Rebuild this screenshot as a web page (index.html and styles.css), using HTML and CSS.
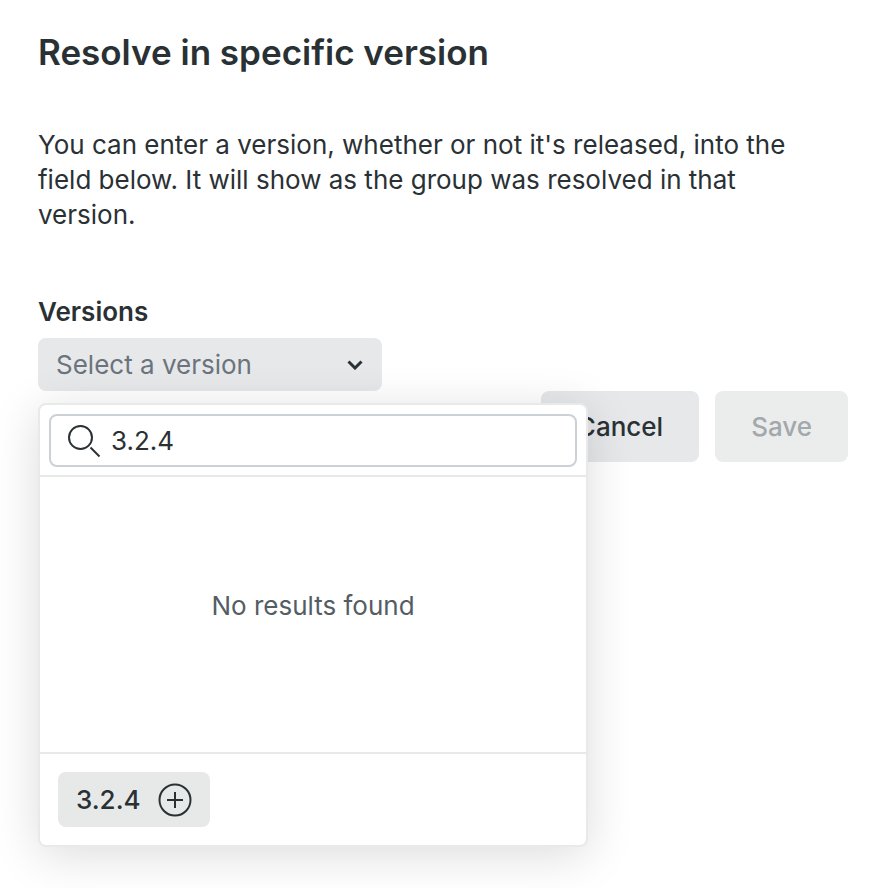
FILE: index.html
```html
<!DOCTYPE html>
<html lang="en">
<head>
    <meta charset="UTF-8">
    <meta name="viewport" content="width=device-width, initial-scale=1.0">
    <title>Resolve in specific version</title>
    <link rel="stylesheet" href="styles.css">
</head>
<body>
    <main class="dialog">
        <h1>Resolve in specific version</h1>
        <p class="description">You can enter a version, whether or not it's released, into the field below. It will show as the group was resolved in that version.</p>

        <div class="field">
            <label class="field-label" for="version">Versions</label>
            <div class="select-wrap">
                <select id="version" class="version-select">
                    <option>Select a version</option>
                </select>
                <svg class="chevron" viewBox="0 0 16 10" aria-hidden="true">
                    <path d="M1.5 1.5L8 8l6.5-6.5"/>
                </svg>
            </div>

            <div class="menu">
                <div class="menu-search">
                    <div class="search-box">
                        <svg class="search-icon" viewBox="0 0 34 34" aria-hidden="true">
                            <circle cx="13.5" cy="13.5" r="11.5"/>
                            <path d="M23.5 23.5l9 9"/>
                        </svg>
                        <input type="text" class="search-input" aria-label="Search versions" value="3.2.4">
                    </div>
                </div>
                <div class="menu-empty">No results found</div>
                <div class="menu-footer">
                    <button type="button" class="add-button">
                        3.2.4
                        <svg class="plus-icon" viewBox="0 0 34 34" aria-hidden="true">
                            <circle cx="17" cy="17" r="15.5"/>
                            <path d="M17 9v16M9 17h16"/>
                        </svg>
                    </button>
                </div>
            </div>
        </div>

        <div class="actions">
            <button type="button" class="button">Cancel</button>
            <button type="button" class="button" disabled>Save</button>
        </div>
    </main>
</body>
</html>
```

FILE: styles.css
```css
* {
    box-sizing: border-box;
}
body {
    min-height: 100vh;
    margin: 0;
    background-color: #fff;
    color: #2a3135;
    font-family: Inter, sans-serif;
    font-size: 26px;
}
button, input, select {
    font: inherit;
    color: inherit;
}
.dialog {
    min-height: 100vh;
    padding: 30px 42px 0 38px;
}
h1 {
    margin: 0 0 52px;
    font-size: 35px;
    font-weight: 600;
    line-height: 45px;
}
.description {
    max-width: 780px;
    margin: 0 0 60px;
    line-height: 35px;
}
.field {
    position: relative;
}
.field-label {
    display: block;
    margin-bottom: 6px;
    font-weight: 600;
    line-height: 40px;
}
.select-wrap {
    display: grid;
    align-items: center;
    width: 344px;
}
.version-select {
    grid-area: 1 / 1;
    width: 100%;
    height: 53px;
    padding: 0 18px;
    border: none;
    border-radius: 8px;
    background-color: #e6e8ea;
    color: #6b747c;
    appearance: none;
}
.chevron {
    grid-area: 1 / 1;
    justify-self: end;
    width: 16px;
    margin-right: 19px;
    pointer-events: none;
}
svg {
    fill: none;
    stroke: #2a3135;
    stroke-width: 2;
}
.chevron {
    stroke-width: 3;
}
.menu {
    position: absolute;
    top: 100%;
    left: 0;
    z-index: 1;
    width: 550px;
    margin-top: 12px;
    border: 2px solid #e8eaea;
    border-radius: 8px;
    background-color: #fff;
    box-shadow: 0 8px 48px rgba(0, 0, 0, 0.14);
}
.menu-search {
    padding: 9px 9px 8px;
    border-bottom: 2px solid #e8eaea;
}
.search-box {
    display: flex;
    align-items: center;
    gap: 10px;
    height: 53px;
    padding: 0 16px;
    border: 2px solid #cbd1d4;
    border-radius: 8px;
}
.search-icon {
    flex: none;
    width: 34px;
}
.search-input {
    flex: 1;
    min-width: 0;
    padding: 0;
    border: none;
    outline: none;
    background: none;
}
.menu-empty {
    padding: 111px 16px 129px;
    color: #545d64;
    line-height: 35px;
    text-align: center;
}
.menu-footer {
    padding: 18px;
    border-top: 2px solid #e8eaea;
}
.add-button {
    display: flex;
    align-items: center;
    gap: 17px;
    height: 55px;
    padding: 0 18px;
    border: none;
    border-radius: 8px;
    background-color: #e7e9e8;
    font-weight: 500;
}
.plus-icon {
    width: 34px;
}
.actions {
    display: flex;
    justify-content: flex-end;
    gap: 16px;
}
.button {
    height: 71px;
    padding: 0 36px;
    border: none;
    border-radius: 8px;
    background-color: #e6e8ea;
    font-weight: 500;
}
.button:disabled {
    background-color: #ebedec;
    color: #a3a8ac;
}
```
